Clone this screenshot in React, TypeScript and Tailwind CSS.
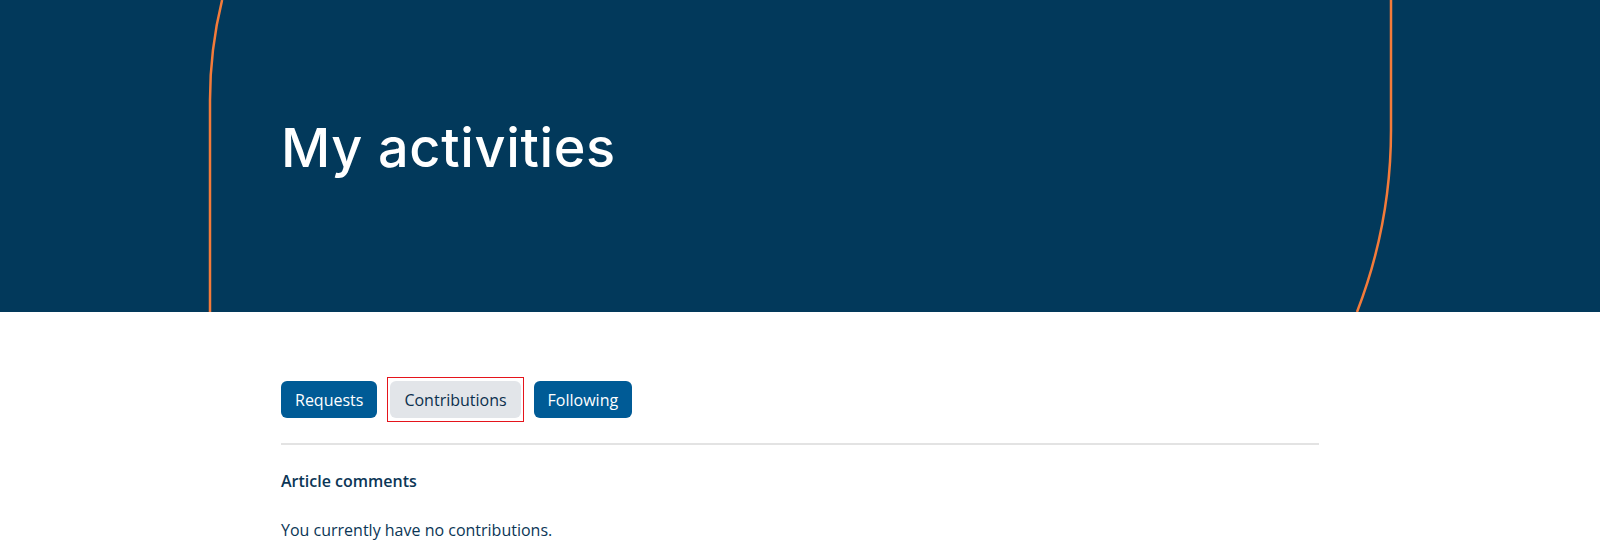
import { useState } from "react";

const tabs = ["Requests", "Contributions", "Following"];

export default function App() {
  const [active, setActive] = useState("Contributions");

  return (
    <div className="min-h-screen bg-white font-['Open_Sans','Noto_Sans',sans-serif]">
      {/* Hero */}
      <div className="relative h-[312px] overflow-hidden bg-[#02395b]">
        {/* Decorative outline */}
        <svg
          className="pointer-events-none absolute inset-0 h-full w-full"
          viewBox="0 0 1600 312"
          preserveAspectRatio="none"
          fill="none"
        >
          <path d="M222.1 0 A420 420 0 0 0 210 100 L210 312" stroke="#f47b3a" strokeWidth="2.5" />
          <path d="M1391 0 L1391 130 A504 504 0 0 1 1357 312" stroke="#f47b3a" strokeWidth="2.5" />
        </svg>
        <div className="relative mx-auto flex h-full w-[1038px] items-center pb-[16px]">
          <h1 className="font-['Inter',sans-serif] text-[54px] font-medium leading-none tracking-[0.012em] text-white">
            My activities
          </h1>
        </div>
      </div>

      {/* Content */}
      <div className="mx-auto w-[1038px] pt-[69px]">
        <div className="flex items-center gap-[13px]">
          {tabs.map((t) => (
            <button
              key={t}
              onClick={() => setActive(t)}
              className={
                t === active
                  ? "relative h-[37px] rounded-md bg-[#e2e5e9] px-[14px] text-base text-[#0b2f4d] after:absolute after:-inset-x-[3px] after:-inset-y-[4px] after:border-[1.5px] after:border-[#e5141b] after:content-['']"
                  : "h-[37px] rounded-md bg-[#005b96] px-[14px] text-base text-white"
              }
            >
              {t}
            </button>
          ))}
        </div>

        <div className="mt-[25px] h-[2px] bg-[#e3e3e3]" />

        <h2 className="mt-[24px] text-base font-[550] leading-6 text-[#0b3656]">Article comments</h2>
        <p className="mt-[25px] text-base leading-6 text-[#0b3656]">You currently have no contributions.</p>
      </div>
    </div>
  );
}
